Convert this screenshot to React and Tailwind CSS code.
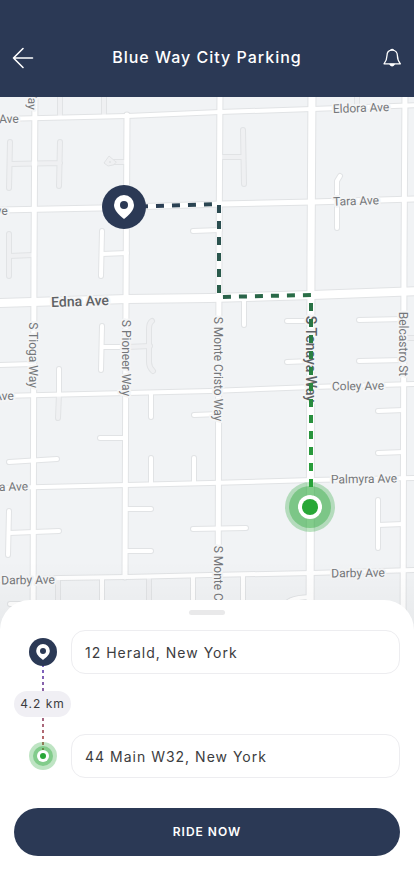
import { useState } from 'react';

const mainRoads = [
  { d: 'M35 90 L34 260 L33 640', width: 5 },
  { d: 'M127 115 L126 300 L125 577', width: 5 },
  { d: 'M220 90 L219 260 L218 640', width: 5 },
  { d: 'M405 90 L404 260 L403 640', width: 5 },
  { d: 'M-4 119 L127 116 L220 112 L312 109 L418 105', width: 4 },
  { d: 'M-4 210 L100 208 L220 204 L312 202 L418 199', width: 5 },
  { d: 'M-4 396 L127 393 L210 391 L312 387 L418 384', width: 4 },
  { d: 'M-4 488 L127 485 L210 483 L312 480 L418 478', width: 4 },
  { d: 'M-4 580 L60 578 L127 577 L210 575 L312 573 L418 570', width: 4 },
  { d: 'M312 90 L311 260 L310 640', width: 7 },
  { d: 'M-4 303 L127 299 L210 298 L312 295 L418 291', width: 8 }
];

const sideStreets = [
  'M102 231 L101 276 M102 254 L127 253',
  'M193 231 L220 230',
  'M340 176 L337 181 L337 228',
  'M102 326 L101 370 M102 347 L127 347',
  'M-4 365 L33 364',
  'M59 369 L59 394',
  'M151 393 L151 417',
  'M194 415 L219 414',
  'M244 298 L244 325',
  'M287 321 L311 321',
  'M287 362 L311 361',
  'M359 320 L404 319',
  'M359 361 L404 360',
  'M378 411 L404 410',
  'M378 453 L404 452',
  'M378 500 L378 548 M378 525 L403 524',
  'M9 462 L57 459',
  'M100 438 L126 438',
  'M151 458 L151 484',
  'M194 458 L194 483',
  'M9 511 L8 555 M9 533 L59 531',
  'M126 509 L151 509',
  'M126 551 L151 551',
  'M193 529 L246 528',
  'M102 579 L102 640',
  'M193 577 L193 640',
  'M243 576 L243 640',
  'M10 604 L33 604',
  'M286 606 Q286 598 310 597'
];

const alleys = [
  'M10 142 L9 188 M10 164 L60 163 M60 142 L59 186',
  'M60 90 L60 115',
  'M104 90 L104 114',
  'M357 90 L357 106',
  'M9 234 L9 276 M9 256 L33 255',
  'M243 130 L244 184 M220 157 L243 157',
  'M127 347 L150 346',
  'M152 321 Q149 323 149 329 L149 362 Q149 367 153 371',
  'M59 394 L58 418',
  'M404 338 L418 338',
  'M58 580 L58 640',
  'M149 578 L149 640',
  'M114 162 L125 162'
];

const labels = [
  { text: 'Eldora Ave', x: 361, y: 108, angle: -2 },
  { text: 'Tara Ave', x: 356, y: 201, angle: -2 },
  { text: 'Coley Ave', x: 358, y: 386, angle: -1 },
  { text: 'Palmyra Ave', x: 364, y: 479, angle: -1 },
  { text: 'Darby Ave', x: 358, y: 573, angle: -1 },
  { text: 'Darby Ave', x: 28, y: 580, angle: -1 },
  { text: 'Ave', x: 9, y: 119, angle: -2 },
  { text: 'Ave', x: -2, y: 211, angle: -2 },
  { text: 'Ave', x: 4, y: 396, angle: -1 },
  { text: 'Palmyra Ave', x: -5, y: 487, angle: -1 },
  { text: 'S Tioga Way', x: 33, y: 355, angle: 90 },
  { text: 'S Tioga Way', x: 33, y: 77, angle: 92 },
  { text: 'S Pioneer Way', x: 126, y: 358, angle: 90 },
  { text: 'S Monte Cristo Way', x: 218, y: 369, angle: 90 },
  { text: 'S Monte Cristo Way', x: 218, y: 598, angle: 90 },
  { text: 'Belcastro St', x: 403, y: 344, angle: 90 }
];

const majorLabels = [
  { text: 'Edna Ave', x: 80, y: 301, angle: -2 },
  { text: 'S Tenaya Way', x: 311, y: 359, angle: 90 }
];

function MapLabel({ label, size, fill }) {
  return (
    <text
      transform={`translate(${label.x} ${label.y}) rotate(${label.angle})`}
      fontSize={size}
      fill={fill}
      stroke="#f4f5f6"
      strokeWidth="4"
      strokeLinejoin="round"
      paintOrder="stroke"
      textAnchor="middle"
      dominantBaseline="central"
    >
      {label.text}
    </text>
  );
}

function CityMap() {
  return (
    <svg
      viewBox="0 97 414 535"
      preserveAspectRatio="xMidYMin slice"
      className="block h-auto w-full bg-[#f1f3f5] font-['Roboto',sans-serif]"
      role="img"
      aria-label="Route map"
    >
      <defs>
        <linearGradient id="route" gradientUnits="userSpaceOnUse" x1="124" y1="207" x2="310" y2="507">
          <stop offset="0" stopColor="#2b3955" />
          <stop offset="1" stopColor="#28a737" />
        </linearGradient>
        <linearGradient id="fade" x1="0" y1="0" x2="0" y2="1">
          <stop offset="0" stopColor="#000" stopOpacity="0" />
          <stop offset="1" stopColor="#000" stopOpacity="0.04" />
        </linearGradient>
      </defs>

      {/* Roads: casing first, then the surface on top */}
      <g fill="none" strokeLinecap="round" strokeLinejoin="round">
        <g stroke="#e1e3e5">
          {alleys.map((d) => <path key={d} d={d} strokeWidth="6" />)}
          {sideStreets.map((d) => <path key={d} d={d} strokeWidth="6" />)}
          {mainRoads.map((road) => <path key={road.d} d={road.d} strokeWidth={road.width + 2} />)}
        </g>
        {alleys.map((d) => <path key={d} d={d} stroke="#eff0f2" strokeWidth="4" />)}
        {sideStreets.map((d) => <path key={d} d={d} stroke="#fff" strokeWidth="4" />)}
        {mainRoads.map((road) => <path key={road.d} d={road.d} stroke="#fff" strokeWidth={road.width} />)}
        <path d="M116 162 L109 156 L104 163 L108 166 L113 165 Z" fill="#eff0f2" stroke="#e1e3e5" />
        <circle cx="110" cy="162" r="1" fill="#e1e3e5" />
      </g>

      {labels.map((label) => (
        <MapLabel key={`${label.text}-${label.x}-${label.y}`} label={label} size={12} fill="#74777a" />
      ))}
      <g className="font-medium">
        {majorLabels.map((label) => (
          <MapLabel key={label.text} label={label} size={14} fill="#5f6265" />
        ))}
      </g>

      <rect y="560" width="414" height="72" fill="url(#fade)" />

      {/* Route */}
      <path
        d="M124 207 L219 204 L219 297 L311 295 L311 507"
        fill="none"
        stroke="url(#route)"
        strokeWidth="4"
        strokeDasharray="8 8"
      />

      {/* Start */}
      <circle cx="124" cy="207" r="22" fill="#2b3955" />
      <path d="M124 219 C118 214 114 210 114 205 A10 10 0 0 1 134 205 C134 210 130 214 124 219 Z" fill="#fff" />
      <circle cx="124" cy="205" r="4" fill="#2b3955" />

      {/* Destination */}
      <circle cx="310" cy="507" r="25" fill="#28a737" fillOpacity="0.3" />
      <circle cx="310" cy="507" r="21" fill="#28a737" fillOpacity="0.4" />
      <circle cx="310" cy="507" r="12" fill="#fff" />
      <circle cx="310" cy="507" r="8" fill="#28a737" />
    </svg>
  );
}

function Header() {
  return (
    <header className="flex items-center justify-between bg-[#2b3955] px-3 pt-[42px] pb-[23px] text-white">
      <button type="button" aria-label="Back" className="flex h-8 w-6 items-center">
        <svg viewBox="0 0 22 22" className="size-[22px]" fill="none" stroke="currentColor" strokeWidth="1.6" strokeLinecap="round" strokeLinejoin="round">
          <path d="M20.5 11 H1.5 M11 1.5 L1.5 11 L11 20.5" />
        </svg>
      </button>
      <h1 className="pb-[2px] text-base font-medium tracking-[1px]">Blue Way City Parking</h1>
      <button type="button" aria-label="Notifications" className="flex h-8 w-6 items-center justify-end">
        <svg viewBox="0 0 20 20" className="size-5" fill="none" stroke="currentColor" strokeWidth="1.3" strokeLinejoin="round">
          <path d="M10 2.2 C6.8 2.2 5 4.6 5 7.6 C5 11.6 4.2 13 2 15.8 H18.4 C16 13 15.4 11.6 15.4 7.6 C15.4 4.6 13.4 2.2 10 2.2 Z" />
          <path d="M8.6 2.2 Q10.1 0.4 11.6 2.2" />
          <path d="M8 16.4 Q10.1 19.4 12.2 16.4 Z" fill="currentColor" />
        </svg>
      </button>
    </header>
  );
}

function RouteSteps() {
  return (
    <div className="relative flex w-[57px] flex-col items-center justify-between py-2">
      <svg viewBox="0 0 2 98" className="absolute top-[22px] left-1/2 h-[98px] w-[2px] -translate-x-1/2">
        <defs>
          <linearGradient id="distance" gradientUnits="userSpaceOnUse" x1="0" y1="0" x2="0" y2="98">
            <stop offset="0" stopColor="#6c5fd3" />
            <stop offset="1" stopColor="#bf6a5c" />
          </linearGradient>
        </defs>
        <path d="M1 0 V98" stroke="url(#distance)" strokeWidth="2" strokeDasharray="3 3" />
      </svg>
      <svg viewBox="0 0 28 28" className="relative size-7">
        <circle cx="14" cy="14" r="14" fill="#2b3955" />
        <path d="M14 22 C10 19 7.2 16.4 7.2 12.8 A6.8 6.8 0 0 1 20.8 12.8 C20.8 16.4 18 19 14 22 Z" fill="#fff" />
        <circle cx="14" cy="13" r="3" fill="#2b3955" />
      </svg>
      <span className="relative w-full rounded-full bg-[#f0eff4] text-center text-xs leading-[26px] tracking-[1px] text-[#3c3c40]">
        4.2 km
      </span>
      <svg viewBox="0 0 28 28" className="relative size-7">
        <circle cx="14" cy="14" r="14" fill="#28a737" fillOpacity="0.3" />
        <circle cx="14" cy="14" r="10" fill="#28a737" fillOpacity="0.4" />
        <circle cx="14" cy="14" r="6" fill="#fff" />
        <circle cx="14" cy="14" r="3" fill="#28a737" />
      </svg>
    </div>
  );
}

function AddressField({ label, value, onChange }) {
  return (
    <label className="block">
      <span className="sr-only">{label}</span>
      <input
        type="text"
        value={value}
        onChange={(e) => onChange(e.target.value)}
        className="h-11 w-full rounded-[14px] border border-[#ededf0] bg-white px-[13px] text-sm tracking-[1px] text-[#3c3c40] outline-none"
      />
    </label>
  );
}

function App() {
  const [pickup, setPickup] = useState('12 Herald, New York');
  const [dropoff, setDropoff] = useState('44 Main W32, New York');

  return (
    <div className="flex min-h-screen flex-col bg-white font-['Inter',sans-serif]">
      <Header />
      <main className="flex flex-1 flex-col">
        <CityMap />
        <section className="relative -mt-8 flex-1 rounded-t-[30px] bg-white px-[14px] pt-[10px] pb-10">
          <div className="mx-auto h-[5px] w-9 rounded-full bg-[#e9e9ea]" />
          <form className="mt-[15px]" onSubmit={(e) => e.preventDefault()}>
            <div className="flex">
              <RouteSteps />
              <div className="flex flex-1 flex-col gap-[60px]">
                <AddressField label="Pickup address" value={pickup} onChange={setPickup} />
                <AddressField label="Destination address" value={dropoff} onChange={setDropoff} />
              </div>
            </div>
            <button
              type="submit"
              className="mt-[30px] h-12 w-full rounded-full bg-[#2b3955] text-xs font-semibold tracking-[1px] text-white"
            >
              RIDE NOW
            </button>
          </form>
        </section>
      </main>
    </div>
  );
}

export default App;
